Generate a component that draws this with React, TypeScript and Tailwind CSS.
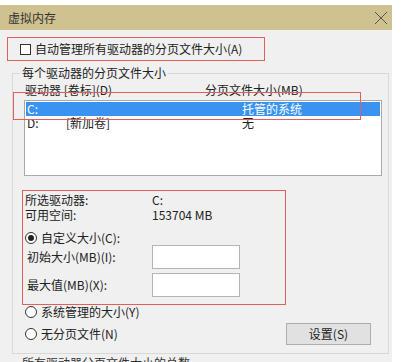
import React from "react";

const font = { fontFamily: '"Noto Sans CJK SC", "Noto Sans", sans-serif' };

function Radio({ checked }: { checked?: boolean }) {
  return (
    <span className="w-[12px] h-[12px] rounded-full border border-[#333] bg-white flex items-center justify-center shrink-0">
      {checked && <span className="w-[6px] h-[6px] rounded-full bg-[#222]" />}
    </span>
  );
}

export default function App() {
  return (
    <div
      className="w-[402px] h-[362px] overflow-hidden bg-white text-[12px] leading-[14px] text-[#222]"
      style={font}
    >
      <div className="h-[5px] bg-white" />
      <div className="flex">
        <div className="w-[392px] h-[357px] overflow-hidden bg-[#f0f0f0] flex flex-col">
          {/* title bar */}
          <div className="h-[25px] shrink-0 bg-[#cfc190] flex items-center justify-between pl-[8px] pr-[4px]">
            <span className="text-[12px] text-[#333]">虚拟内存</span>
            <svg width="14" height="14" viewBox="0 0 14 14">
              <path d="M1 1 L13 13 M13 1 L1 13" stroke="#555" strokeWidth="1" fill="none" />
            </svg>
          </div>

          {/* auto manage checkbox */}
          <div className="shrink-0 mt-[7px] ml-[7px] w-[258px] h-[24px] border border-[#e35d5d] flex items-center pl-[12px]">
            <span className="w-[11px] h-[11px] border border-[#333] bg-white shrink-0" />
            <span className="ml-[4px]">自动管理所有驱动器的分页文件大小(A)</span>
          </div>

          {/* group box */}
          <div className="shrink-0 relative mt-[12px] ml-[12px] w-[377px] h-[281px] border border-[#d8d8d8] flex flex-col">
            <span className="absolute -top-[8px] left-[7px] px-[2px] bg-[#f0f0f0]">
              每个驱动器的分页文件大小
            </span>

            <div className="shrink-0 mt-[9px] ml-[12px] flex">
              <span className="w-[180px]">驱动器 [卷标](D)</span>
              <span>分页文件大小(MB)</span>
            </div>

            <div className="shrink-0 mt-[3px] ml-[11px] w-[358px] h-[76px] border border-[#a9a9a9] bg-white p-[1px] flex flex-col">
              <div className="h-[14px] shrink-0 bg-[#3a93f0] text-white flex items-center">
                <span className="ml-[1px] w-[215px]">C:</span>
                <span>托管的系统</span>
              </div>
              <div className="h-[14px] shrink-0 flex items-center">
                <span className="ml-[1px] w-[39px]">D:</span>
                <span className="w-[176px]">[新加卷]</span>
                <span>无</span>
              </div>
            </div>

            {/* selected drive box */}
            <div className="shrink-0 mt-[14px] ml-[9px] w-[264px] h-[115px] border border-[#e35d5d] flex flex-col pl-[2px]">
              <div className="shrink-0 mt-[2px] h-[14px] flex items-center">
                <span className="w-[127px]">所选驱动器:</span>
                <span>C:</span>
              </div>
              <div className="shrink-0 mt-[1px] h-[14px] flex items-center">
                <span className="w-[127px]">可用空间:</span>
                <span>153704 MB</span>
              </div>
              <div className="shrink-0 mt-[9px] h-[14px] flex items-center">
                <Radio checked />
                <span className="ml-[4px]">自定义大小(C):</span>
              </div>
              <div className="shrink-0 h-[24px] flex items-center">
                <span className="w-[127px] pl-[2px]">初始大小(MB)(I):</span>
                <span className="w-[88px] h-[24px] border border-[#b4b4b4] bg-white" />
              </div>
              <div className="shrink-0 mt-[4px] h-[24px] flex items-center">
                <span className="w-[127px] pl-[2px]">最大值(MB)(X):</span>
                <span className="w-[88px] h-[24px] border border-[#b4b4b4] bg-white" />
              </div>
            </div>

            <div className="shrink-0 ml-[12px] h-[14px] flex items-center">
              <Radio />
              <span className="ml-[4px]">系统管理的大小(Y)</span>
            </div>
            <div className="shrink-0 ml-[12px] mt-[4px] flex items-center">
              <div className="flex items-center w-[261px]">
                <Radio />
                <span className="ml-[4px]">无分页文件(N)</span>
              </div>
              <button className="w-[85px] h-[22px] bg-[#e1e1e1] border border-[#adadad] text-[12px] leading-[14px] text-[#222]">
                设置(S)
              </button>
            </div>

            {/* red overlay annotation around first row */}
            <div className="absolute left-[0px] top-[18px] w-[348px] h-[28px] border border-[#e35d5d] pointer-events-none" />
          </div>

          <div className="shrink-0 mt-[2px] ml-[22px] text-[#333]">所有驱动器分页文件大小的总数</div>
        </div>
      </div>
    </div>
  );
}
